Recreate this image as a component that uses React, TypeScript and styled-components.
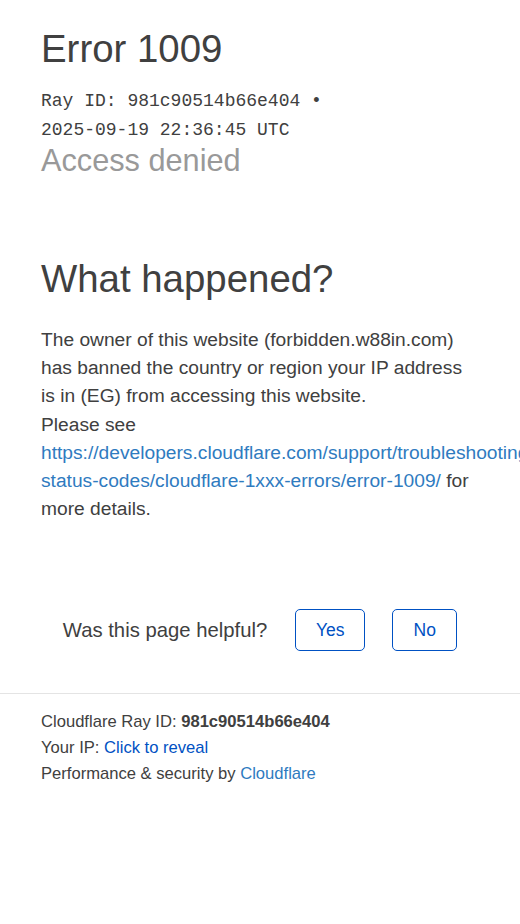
import styled, { createGlobalStyle } from "styled-components";

const GlobalStyle = createGlobalStyle`
  html, body {
    margin: 0;
    padding: 0;
    background: #ffffff;
  }
  body {
    font-family: "Liberation Sans", Arial, Helvetica, sans-serif;
    color: #404040;
  }
`;

const Main = styled.main`
  padding: 26px 41px 0;
`;

const Title = styled.h1`
  margin: 0;
  font-size: 38.4px;
  line-height: 46px;
  font-weight: 400;
  color: #404040;
`;

const RayLine = styled.div`
  margin-top: 15px;
  font-family: "Liberation Mono", "Courier New", monospace;
  font-size: 18px;
  line-height: 28.5px;
  color: #404040;
`;

const Subtitle = styled.h2`
  margin: 0;
  font-size: 30.7px;
  line-height: 34px;
  font-weight: 400;
  color: #999999;
`;

const Section = styled.section`
  margin-top: 78px;
  width: 438px;
`;

const SectionTitle = styled.h2`
  margin: 0;
  font-size: 38.4px;
  line-height: 46px;
  font-weight: 400;
  color: #404040;
`;

const Para = styled.p`
  margin: 24px 0 0;
  font-size: 19.2px;
  line-height: 28.2px;
  color: #404040;
`;

const Link = styled.a<{ $dark?: boolean }>`
  color: ${(p) => (p.$dark ? "#0051c3" : "#2f7bbf")};
  text-decoration: none;
`;

const Helpful = styled.div`
  margin-top: 86px;
  display: flex;
  align-items: center;
  justify-content: center;
  gap: 27px;
`;

const Question = styled.span`
  font-size: 20.3px;
  color: #404040;
  margin-right: 1px;
`;

const FeedbackButton = styled.button<{ $w: number }>`
  width: ${(p) => p.$w}px;
  height: 42px;
  border: 1.5px solid #0051c3;
  border-radius: 5px;
  background: #ffffff;
  color: #0051c3;
  font-family: "Liberation Sans", Arial, sans-serif;
  font-size: 17.5px;
  padding: 0;
`;

const Footer = styled.footer`
  margin-top: 42px;
  border-top: 1px solid #e4e4e4;
  padding: 15px 41px 0;
  font-size: 16.6px;
  line-height: 26px;
  color: #404040;
`;

const Bold = styled.strong`
  font-weight: 700;
`;

export default function App() {
  return (
    <>
      <GlobalStyle />
      <Main>
        <Title>Error 1009</Title>
        <RayLine>
          Ray ID: 981c90514b66e404 •<br />
          2025-09-19 22:36:45 UTC
        </RayLine>
        <Subtitle>Access denied</Subtitle>
        <Section>
          <SectionTitle>What happened?</SectionTitle>
          <Para>
            The owner of this website (forbidden.w88in.com) has banned the
            country or region your IP address is in (EG) from accessing this
            website.
            <br />
            Please see{" "}
            <Link href="#">
              https://developers.cloudflare.com/support/troubleshooting/http-status-codes/cloudflare-1xxx-errors/error-1009/
            </Link>{" "}
            for more details.
          </Para>
        </Section>
      </Main>
      <Helpful>
        <Question>Was this page helpful?</Question>
        <FeedbackButton $w={70}>Yes</FeedbackButton>
        <FeedbackButton $w={65}>No</FeedbackButton>
      </Helpful>
      <Footer>
        <div>
          Cloudflare Ray ID: <Bold>981c90514b66e404</Bold>
        </div>
        <div>
          Your IP: <Link $dark href="#">Click to reveal</Link>
        </div>
        <div>
          Performance &amp; security by <Link href="#">Cloudflare</Link>
        </div>
      </Footer>
    </>
  );
}
